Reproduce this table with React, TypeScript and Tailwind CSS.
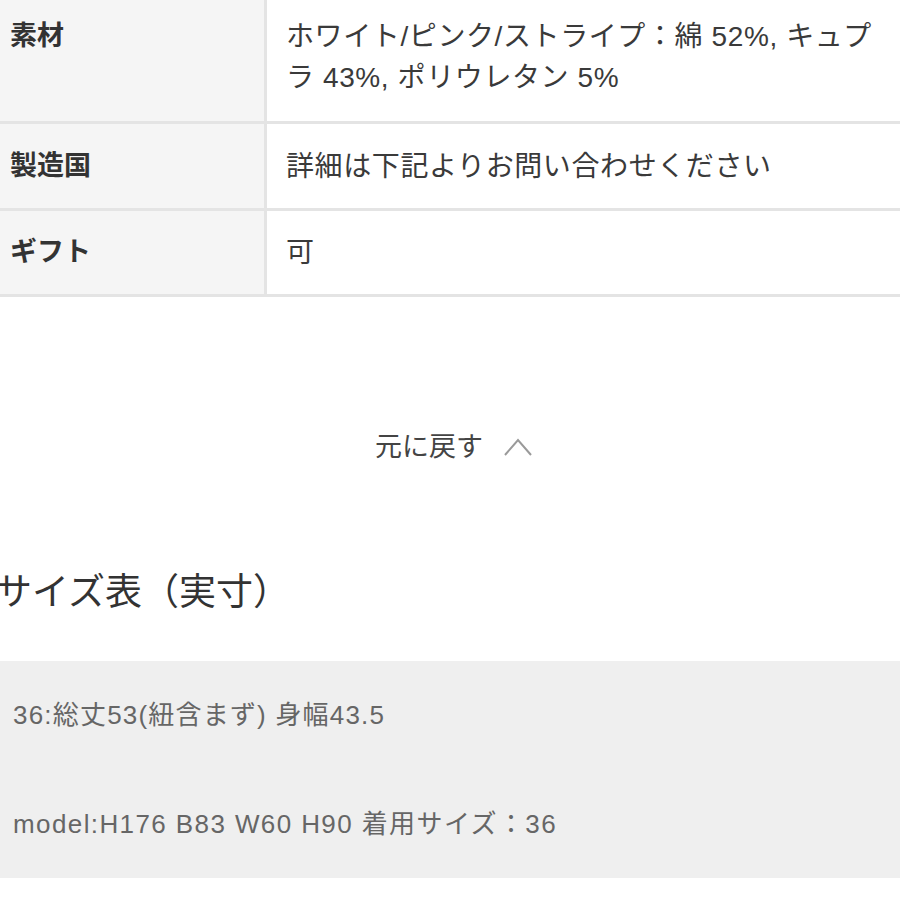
import React from "react";

const ROWS = [
  { label: "素材", value: "ホワイト/ピンク/ストライプ：綿 52%, キュプラ 43%, ポリウレタン 5%", h: "h-[124px]", align: "items-start pt-[16px]" },
  { label: "製造国", value: "詳細は下記よりお問い合わせください", h: "h-[87px]", align: "items-center" },
  { label: "ギフト", value: "可", h: "h-[86px]", align: "items-center" },
];

function SpecRow({ r }: { r: typeof ROWS[0] }) {
  return (
    <div className={`flex ${r.h} border-b-[3px] border-[#e4e4e4]`}>
      <div className={`w-[267px] shrink-0 flex ${r.align} bg-[#f5f5f5] border-r-[3px] border-[#e4e4e4] pl-[10px]`}>
        <span className="text-[27px] leading-[41px] font-bold text-[#333]">{r.label}</span>
      </div>
      <div className={`flex-1 flex ${r.align} pl-[19px] pr-[24px]`}>
        <p className="text-[28px] leading-[41px] tracking-[0.6px] text-[#3a3a3a]">{r.value}</p>
      </div>
    </div>
  );
}

export default function App() {
  return (
    <div
      className="w-[900px] h-[900px] bg-white overflow-hidden"
      style={{ fontFamily: '"Liberation Sans", "Noto Sans CJK JP", sans-serif' }}
    >
      {/* spec table */}
      <div className="flex flex-col">
        {ROWS.map((r) => (
          <SpecRow key={r.label} r={r} />
        ))}
      </div>

      {/* collapse */}
      <div className="mt-[130px] h-[40px] flex items-center justify-center gap-[20px] pl-[8px]">
        <span className="text-[27px] text-[#444]">元に戻す</span>
        <svg width="30" height="20" viewBox="0 0 30 20" fill="none">
          <path d="M2 18 L15 3 L28 18" stroke="#9a9a9a" strokeWidth="2" />
        </svg>
      </div>

      {/* size chart */}
      <h2 className="mt-[104px] ml-[-5px] h-[44px] text-[37px] leading-[44px] font-normal text-[#333] whitespace-nowrap">サイズ表（実寸）</h2>

      <div className="mt-[46px] h-[217px] bg-[#efefef] pl-[13px] pt-[39px] flex flex-col gap-[79px]">
        <p className="text-[26px] leading-[30px] tracking-[1.2px] text-[#666]">36:総丈53(紐含まず) 身幅43.5</p>
        <p className="text-[26px] leading-[30px] tracking-[1.4px] text-[#666]">model:H176 B83 W60 H90 着用サイズ：36</p>
      </div>
    </div>
  );
}
